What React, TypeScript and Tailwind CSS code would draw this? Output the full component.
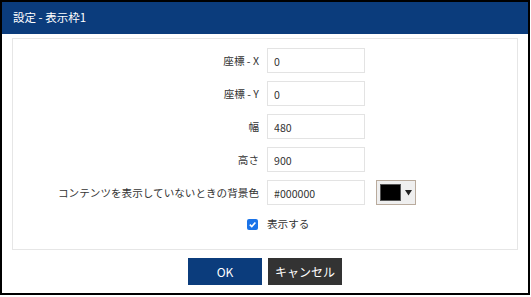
import React from "react"

const font = { fontFamily: '"Noto Sans CJK JP", "Noto Sans", sans-serif' }

function Row({ label, value, extra }: { label: string; value: string; extra?: React.ReactNode }) {
  return (
    <div className="flex items-center h-[25px]">
      <div className="w-[254px] text-right text-[10.6px] text-[#333] pr-[8px] shrink-0">{label}</div>
      <input
        readOnly
        value={value}
        className="w-[98px] h-[25px] border border-[#e3e3e3] px-[6px] pt-[2px] text-[10.6px] text-[#333] outline-none"
        style={font}
      />
      {extra}
    </div>
  )
}

function ColorPicker() {
  return (
    <div className="ml-[11px] w-[40px] h-[25px] border border-[#b9ab9d] bg-[#efefef] flex items-center pl-[3px] gap-[4px]">
      <div className="w-[21px] h-[17px] bg-black border border-[#555]" />
      <svg width="7" height="7" viewBox="0 0 7 7">
        <path d="M0 1 H7 L3.5 6.5 Z" fill="#222" />
      </svg>
    </div>
  )
}

export default function App() {
  return (
    <div className="w-[531px] h-[297px] bg-white" style={font}>
      <div className="w-[530px] h-[295px] border-2 border-black flex flex-col">
        <div className="h-[32px] bg-[#0b3c7c] flex items-center pl-[11px] text-white text-[11.5px]">
          設定 - 表示枠1
        </div>
        <div className="mx-[10px] mt-[4px] h-[212px] border border-[#e6e6e6] pt-[9px] flex flex-col gap-[8px]">
          <Row label="座標 - X" value="0" />
          <Row label="座標 - Y" value="0" />
          <Row label="幅" value="480" />
          <Row label="高さ" value="900" />
          <Row label="コンテンツを表示していないときの背景色" value="#000000" extra={<ColorPicker />} />
          <div className="flex items-center h-[18px] mt-[2px]">
            <div className="w-[254px] flex justify-end pr-[9px]">
              <span className="w-[11px] h-[11px] rounded-[2px] bg-[#1a73e8] flex items-center justify-center">
                <svg width="9" height="9" viewBox="0 0 10 10">
                  <path d="M2 5.2 L4.2 7.3 L8.2 2.8" stroke="white" strokeWidth="1.8" fill="none" />
                </svg>
              </span>
            </div>
            <span className="text-[10.6px] text-[#333]">表示する</span>
          </div>
        </div>
        <div className="flex justify-center gap-[6px] mt-[8px]">
          <button className="w-[74px] h-[27px] bg-[#0b3c7c] text-white text-[12px]">OK</button>
          <button className="w-[74px] h-[27px] bg-[#333333] text-white text-[12px]">キャンセル</button>
        </div>
      </div>
    </div>
  )
}
